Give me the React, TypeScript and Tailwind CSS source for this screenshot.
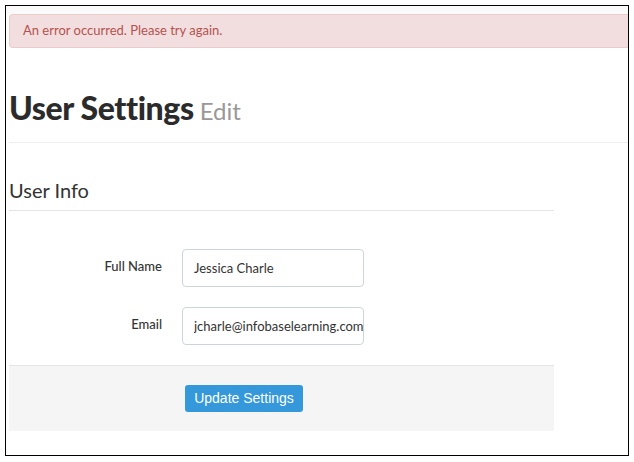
export default function App() {
  return (
    <div className="h-[462px] w-[634px] bg-white p-[5px] font-['Lato',sans-serif]">
      <div className="flex h-[451px] w-[624px] flex-col overflow-hidden border border-black bg-white">
        <div className="h-[8px] bg-[#fafafa]" />
        <div className="ml-[3px] flex h-[34px] items-center rounded-l-[4px] border border-r-0 border-[#ebcccc] bg-[#f2dede] pl-[13px] text-[13px] text-[#b5524f]">
          An error occurred. Please try again.
        </div>
        <div className="ml-[3px] mt-[44px] flex items-baseline gap-[6px] text-[#2b2b2b]">
          <h1 className="text-[32px] font-black leading-none tracking-[-0.4px]">
            User Settings
          </h1>
          <span className="text-[24px] leading-none text-[#999]">Edit</span>
        </div>
        <div className="ml-[3px] mt-[18px] border-t border-[#eee]" />
        <div className="ml-[3px] w-[545px]">
          <h2 className="mt-[37px] text-[20px] leading-none text-[#333]">
            User Info
          </h2>
          <div className="mt-[10px] border-t border-[#e5e5e5]" />
          <form className="flex flex-col">
            <div className="mt-[38px] flex flex-col gap-[20px]">
              <div className="flex items-start">
                <label className="w-[153px] pt-[8px] text-right text-[13px] font-medium text-[#333]">
                  Full Name
                </label>
                <input
                  className="ml-[20px] h-[38px] w-[182px] rounded-[4px] border border-[#ccd4dc] px-[11px] text-[13px] text-[#333] outline-0"
                  defaultValue="Jessica Charle"
                />
              </div>
              <div className="flex items-start">
                <label className="w-[153px] pt-[8px] text-right text-[13px] font-medium text-[#333]">
                  Email
                </label>
                <input
                  className="ml-[20px] h-[38px] w-[182px] rounded-[4px] border border-[#ccd4dc] pl-[11px] pr-0 text-[13px] text-[#333] outline-0"
                  defaultValue="jcharle@infobaselearning.com"
                />
              </div>
            </div>
            <div className="mt-[20px] flex h-[66px] items-center border-t border-[#e5e5e5] bg-[#f5f5f5] pl-[176px]">
              <button
                type="button"
                className="h-[27px] w-[118px] rounded-[3px] bg-[#3498db] font-['Liberation_Sans',sans-serif] text-[14px] text-white"
              >
                Update Settings
              </button>
            </div>
          </form>
        </div>
      </div>
    </div>
  )
}
